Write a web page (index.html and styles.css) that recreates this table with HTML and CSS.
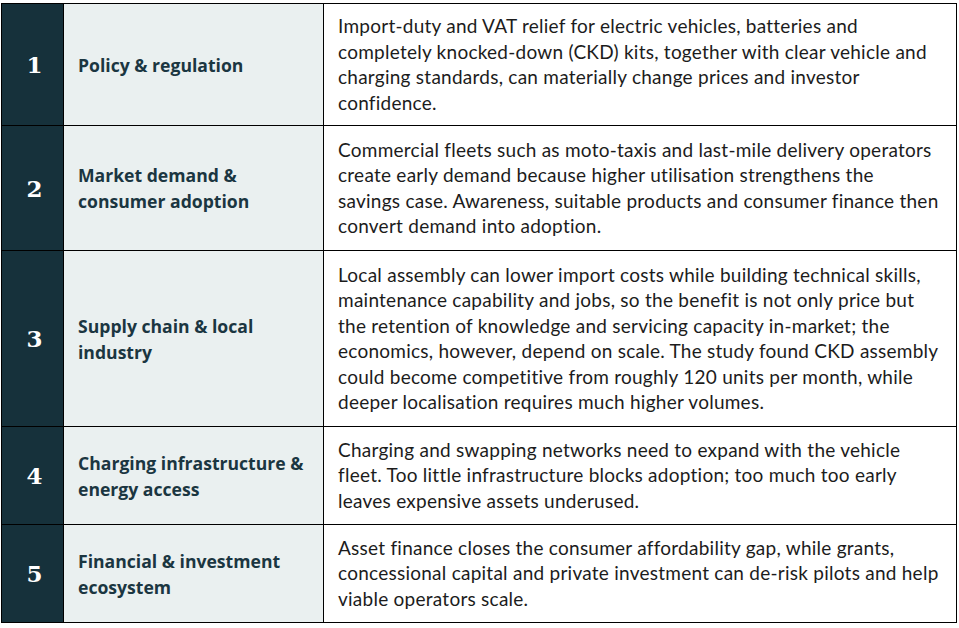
FILE: index.html
```html
<!DOCTYPE html>
<html lang="en">
<head>
<meta charset="utf-8">
<title>EV ecosystem factors</title>
<link rel="stylesheet" href="styles.css">
</head>
<body>
<table class="factors">
  <colgroup>
    <col class="c-num">
    <col class="c-title">
    <col class="c-desc">
  </colgroup>
  <tbody>
    <tr class="r1">
      <td class="num">1</td>
      <td class="title">Policy &amp; regulation</td>
      <td class="desc">Import-duty and VAT relief for electric vehicles, batteries and<br>completely knocked-down (CKD) kits, together with clear vehicle and<br>charging standards, can materially change prices and investor<br>confidence.</td>
    </tr>
    <tr class="r2">
      <td class="num">2</td>
      <td class="title">Market demand &amp;<br>consumer adoption</td>
      <td class="desc">Commercial fleets such as moto-taxis and last-mile delivery operators<br>create early demand because higher utilisation strengthens the<br>savings case. Awareness, suitable products and consumer finance then<br>convert demand into adoption.</td>
    </tr>
    <tr class="r3">
      <td class="num">3</td>
      <td class="title">Supply chain &amp; local<br>industry</td>
      <td class="desc">Local assembly can lower import costs while building technical skills,<br>maintenance capability and jobs, so the benefit is not only price but<br>the retention of knowledge and servicing capacity in-market; the<br>economics, however, depend on scale. The study found CKD assembly<br>could become competitive from roughly 120 units per month, while<br>deeper localisation requires much higher volumes.</td>
    </tr>
    <tr class="r4">
      <td class="num">4</td>
      <td class="title">Charging infrastructure &amp;<br>energy access</td>
      <td class="desc">Charging and swapping networks need to expand with the vehicle<br>fleet. Too little infrastructure blocks adoption; too much too early<br>leaves expensive assets underused.</td>
    </tr>
    <tr class="r5">
      <td class="num">5</td>
      <td class="title">Financial &amp; investment<br>ecosystem</td>
      <td class="desc">Asset finance closes the consumer affordability gap, while grants,<br>concessional capital and private investment can de-risk pilots and help<br>viable operators scale.</td>
    </tr>
  </tbody>
</table>
</body>
</html>
```

FILE: styles.css
```css
html, body {
  margin: 0;
  padding: 0;
  background: #ffffff;
}

body {
  padding: 3px 0 0 1px;
}

.factors {
  border-collapse: collapse;
  table-layout: fixed;
  width: 955px;
}

.c-num { width: 62px; }
.c-title { width: 260px; }
.c-desc { width: 633px; }

.factors td {
  border: 1px solid #000000;
  vertical-align: middle;
  padding: 0;
}

.num {
  background: #16313b;
  color: #ffffff;
  text-align: center;
  font-family: "DejaVu Serif", "Liberation Serif", serif;
  font-weight: bold;
  font-size: 23px;
  padding-left: 4px !important;
}

.title {
  background: #eaf0f0;
  color: #1b3641;
  font-family: "Open Sans", "Noto Sans", sans-serif;
  font-weight: bold;
  font-size: 17.6px;
  line-height: 26px;
  padding: 0 8px 0 14px !important;
}

.desc {
  background: #ffffff;
  color: #1c1c1c;
  font-family: Lato, "Liberation Sans", sans-serif;
  font-size: 19px;
  letter-spacing: 0.25px;
  line-height: 25.5px;
  white-space: nowrap;
  padding: 9px 8px 10px 14px !important;
}

.r1 { height: 121px; }
.r2 { height: 125px; }
.r3 { height: 176px; }
.r4 { height: 98px; }
.r5 { height: 98px; }
```
